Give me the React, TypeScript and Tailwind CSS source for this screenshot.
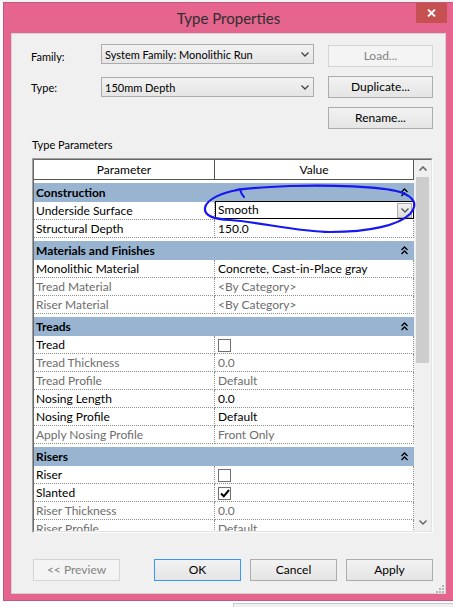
import React from 'react';

type Row = { name: string; value?: string; dim?: boolean; check?: boolean; edit?: boolean };
type Group = { title: string; rows: Row[] };

const groups: Group[] = [
  {
    title: 'Construction',
    rows: [
      { name: 'Underside Surface', value: 'Smooth', edit: true },
      { name: 'Structural Depth', value: '150.0' },
    ],
  },
  {
    title: 'Materials and Finishes',
    rows: [
      { name: 'Monolithic Material', value: 'Concrete, Cast-in-Place gray' },
      { name: 'Tread Material', value: '<By Category>', dim: true },
      { name: 'Riser Material', value: '<By Category>', dim: true },
    ],
  },
  {
    title: 'Treads',
    rows: [
      { name: 'Tread', check: false },
      { name: 'Tread Thickness', value: '0.0', dim: true },
      { name: 'Tread Profile', value: 'Default', dim: true },
      { name: 'Nosing Length', value: '0.0' },
      { name: 'Nosing Profile', value: 'Default' },
      { name: 'Apply Nosing Profile', value: 'Front Only', dim: true },
    ],
  },
  {
    title: 'Risers',
    rows: [
      { name: 'Riser', check: false },
      { name: 'Slanted', check: true },
      { name: 'Riser Thickness', value: '0.0', dim: true },
      { name: 'Riser Profile', value: 'Default', dim: true },
    ],
  },
];

const ChevronDown = ({ color = '#444' }: { color?: string }) => (
  <svg width="8" height="5" viewBox="0 0 8 5">
    <polyline points="0.5,0.5 4,4 7.5,0.5" fill="none" stroke={color} strokeWidth="1.3" />
  </svg>
);

const ChevronUp = ({ color = '#606060' }: { color?: string }) => (
  <svg width="8" height="5" viewBox="0 0 8 5">
    <polyline points="0.5,4.5 4,1 7.5,4.5" fill="none" stroke={color} strokeWidth="1.5" />
  </svg>
);

const Collapse = () => (
  <svg width="7" height="9" viewBox="0 0 7 9">
    <polyline points="0.5,4 3.5,1 6.5,4" fill="none" stroke="#000" strokeWidth="1.3" />
    <polyline points="0.5,8 3.5,5 6.5,8" fill="none" stroke="#000" strokeWidth="1.3" />
  </svg>
);

const ComboBox = ({ value, className = '' }: { value: string; className?: string }) => (
  <div
    className={`h-[20px] w-[213px] border border-[#acacac] bg-gradient-to-b from-[#f2f2f2] to-[#e5e5e5] flex items-center justify-between pl-[3px] pr-[4px] text-[11px] ${className}`}
  >
    <span>{value}</span>
    <ChevronDown />
  </div>
);

const Button = ({
  label,
  width = 'w-[105px]',
  disabled = false,
  focused = false,
  className = '',
}: {
  label: string;
  width?: string;
  disabled?: boolean;
  focused?: boolean;
  className?: string;
}) => (
  <div
    className={`h-[22px] ${width} shrink-0 flex items-center justify-center border ${
      disabled
        ? 'border-[#d5d5d5] bg-[#f4f4f4] text-[#838383]'
        : focused
        ? 'border-[#3399ff] bg-gradient-to-b from-[#f2f2f2] to-[#e5e5e5] text-black'
        : 'border-[#acacac] bg-gradient-to-b from-[#f2f2f2] to-[#e5e5e5] text-black'
    } ${className}`}
  >
    {label}
  </div>
);

const CheckBox = ({ checked }: { checked: boolean }) => (
  <div className="w-[13px] h-[13px] border border-[#707070] bg-white flex items-center justify-center">
    {checked && (
      <svg width="10" height="9" viewBox="0 0 10 9">
        <path d="M1 4.5 L3.8 7.3 L9 1" fill="none" stroke="#000" strokeWidth="2" />
      </svg>
    )}
  </div>
);

const PropertyRow = ({ row }: { row: Row }) => {
  const tone = row.dim ? 'text-[#6d6d6d]' : 'text-black';
  return (
    <div className="flex h-[18px] shrink-0">
      <div
        className={`w-[181px] shrink-0 border-r border-b border-dotted border-[#8f8f8f] pl-[2px] flex items-center ${tone}`}
      >
        {row.name}
      </div>
      {row.edit ? (
        <div className="w-[199px] shrink-0 -mt-px h-[18px] border border-black bg-white flex items-center justify-between pl-[2px] pr-px">
          <span>{row.value}</span>
          <div className="w-[15px] h-[15px] border border-[#acacac] bg-gradient-to-b from-[#f2f2f2] to-[#dcdcdc] flex items-center justify-center">
            <ChevronDown color="#555" />
          </div>
        </div>
      ) : (
        <div
          className={`w-[199px] shrink-0 border-r border-b border-dotted border-[#8f8f8f] pl-[3px] flex ${
            row.check !== undefined ? 'items-end pb-px' : 'items-center'
          } ${tone}`}
        >
          {row.check !== undefined ? <CheckBox checked={row.check} /> : row.value}
        </div>
      )}
    </div>
  );
};

const ParamTable = () => (
  <div className="mt-[6px] h-[375px] w-[401px] border border-t-[#a0a0a0] border-l-[#a0a0a0] border-r-[#fcfcfc] border-b-[#fcfcfc]">
    <div className="h-full border border-t-[#696969] border-l-[#696969] border-r-[#e3e3e3] border-b-[#e3e3e3] flex overflow-hidden bg-white">
      <div className="w-[380px] shrink-0 flex flex-col">
        <div className="flex h-[20px] shrink-0 border-b border-[#555]">
          <div className="w-[181px] shrink-0 border-r border-[#555] flex items-center justify-center">Parameter</div>
          <div className="w-[199px] shrink-0 border-r border-[#555] flex items-center justify-center">Value</div>
        </div>
        {groups.map((g) => (
          <React.Fragment key={g.title}>
            <div className="h-[3px] shrink-0" />
            <div className="h-[19px] shrink-0 bg-[#99b4d1] flex items-center justify-between pl-[2px] pr-[6px] font-bold">
              <span>{g.title}</span>
              <Collapse />
            </div>
            {g.rows.map((r) => (
              <PropertyRow key={r.name} row={r} />
            ))}
          </React.Fragment>
        ))}
      </div>
      {/* vertical scrollbar */}
      <div className="w-[17px] shrink-0 bg-[#f0f0f0] flex flex-col">
        <div className="h-[17px] flex items-center justify-center">
          <ChevronUp />
        </div>
        <div className="h-[186px] mx-[2px] bg-[#cdcdcd]" />
        <div className="flex-1" />
        <div className="h-[17px] flex items-center justify-center">
          <ChevronDown color="#606060" />
        </div>
      </div>
    </div>
  </div>
);

const ResizeGrip = () => (
  <svg width="8" height="8" viewBox="0 0 8 8">
    <rect x="6" y="0" width="2" height="2" fill="#b5b5b5" />
    <rect x="3" y="3" width="2" height="2" fill="#b5b5b5" />
    <rect x="6" y="3" width="2" height="2" fill="#b5b5b5" />
    <rect x="0" y="6" width="2" height="2" fill="#b5b5b5" />
    <rect x="3" y="6" width="2" height="2" fill="#b5b5b5" />
    <rect x="6" y="6" width="2" height="2" fill="#b5b5b5" />
  </svg>
);

export default function App() {
  return (
    <div className="relative w-[453px] h-[607px] overflow-hidden bg-white text-[12px] leading-none text-black font-[family-name:Lato,'Noto_Sans',sans-serif]">
      <div className="h-[2px] bg-[#f3f3f3]" />
      <div className="flex">
        <div className="w-[3px] h-[599px] shrink-0 bg-[#fafafa]" />
        {/* dialog window */}
        <div className="w-[451px] h-[599px] shrink-0 border border-[#c4577d] bg-[#e5658f] flex flex-col">
          <div className="relative h-[30px] shrink-0 flex items-center justify-center">
            <span className="text-[15px] text-[#2e2e2e]">Type Properties</span>
            <div className="absolute top-0 right-[6px] w-[31px] h-[20px] bg-[#c75050] flex items-center justify-center">
              <svg width="9" height="8" viewBox="0 0 9 8">
                <path d="M1 0.5 L8 7.5 M8 0.5 L1 7.5" stroke="#fff" strokeWidth="1.8" />
              </svg>
            </div>
          </div>

          <div className="h-[561px] shrink-0 mx-[7px] border border-[#d4d4d4] bg-[#f0f0f0] flex flex-col pl-[20px] pr-[12px]">
            <div className="mt-[11px] flex h-[22px]">
              <div className="w-[70px] -ml-px shrink-0 flex items-center text-[11px]">Family:</div>
              <ComboBox value="System Family: Monolithic Run" className="-mt-px" />
              <Button label="Load..." disabled className="ml-[14px]" />
            </div>
            <div className="mt-[9px] flex h-[22px]">
              <div className="w-[70px] -ml-px shrink-0 flex items-center text-[11px]">Type:</div>
              <ComboBox value="150mm Depth" className="mt-px" />
              <Button label="Duplicate..." className="ml-[14px]" />
            </div>
            <div className="mt-[9px] flex h-[22px] justify-end">
              <Button label="Rename..." />
            </div>

            <div className="mt-[7px] h-[16px] flex items-center text-[11px]">Type Parameters</div>
            <ParamTable />

            <div className="mt-[26px] flex h-[22px]">
              <Button label="<< Preview" width="w-[87px]" disabled className="ml-px" />
              <Button label="OK" width="w-[87px]" focused className="ml-[34px]" />
              <Button label="Cancel" width="w-[87px]" className="ml-[9px]" />
              <Button label="Apply" width="w-[87px]" className="ml-[9px]" />
            </div>
            <div className="mt-[4px] -mr-[11px] flex justify-end">
              <ResizeGrip />
            </div>
          </div>
        </div>
      </div>
      <div className="flex h-[6px]">
        <div className="w-[233px] shrink-0" />
        <div className="flex-1 mt-[2px] border-l border-t border-[#c8c8c8] bg-[#f0f0f0]" />
      </div>

      {/* hand-drawn marker loop */}
      <svg className="absolute left-0 top-0 pointer-events-none" width="453" height="607" viewBox="0 0 453 607">
        <path
          d="M238 190 C224 192 206 199 205 208 C204 216 214 219 230 220 C260 222 298 232 330 232 C370 232 399 225 410 214 C418 205 415 197 400 192 C380 186 330 185 290 186 C266 187 250 188 236 190"
          fill="none"
          stroke="#1717f0"
          strokeWidth="2.2"
          strokeLinecap="round"
          strokeLinejoin="round"
        />
        <path d="M240 189 Q241 194 244 197" fill="none" stroke="#1717f0" strokeWidth="2" strokeLinecap="round" />
      </svg>
    </div>
  );
}
